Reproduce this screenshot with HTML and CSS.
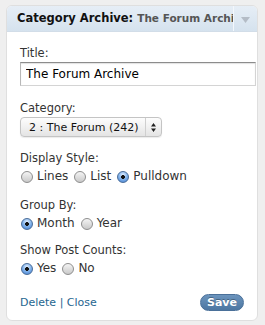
FILE: index.html
```html
<!DOCTYPE html>
<html lang="en">
<head>
  <meta charset="UTF-8">
  <title>Category Archive widget</title>
  <link rel="stylesheet" href="styles.css">
</head>
<body>

<div class="widget">
  <div class="widget-top">
    <div class="widget-title">
      <h4>Category Archive: <span class="in-title">The Forum Archive</span></h4>
    </div>
    <div class="widget-action">
      <svg width="9" height="6" viewBox="0 0 9 6"><path d="M0 0 H9 L4.5 6 Z" fill="#b4bcc6"/></svg>
    </div>
  </div>

  <div class="widget-inside">
    <p class="first">
      <label for="titulo">Title:</label>
      <input id="titulo" class="widefat" type="text" value="The Forum Archive">
    </p>

    <p>
      <label for="cat">Category:</label>
      <span class="select-wrap">
        <select id="cat">
          <option>2 : The Forum (242)</option>
        </select>
        <span class="select-arrows">
          <svg width="5" height="9" viewBox="0 0 5 9"><path d="M2.5 0 L5 3.5 H0 Z M2.5 9 L5 5.5 H0 Z" fill="#222"/></svg>
        </span>
      </span>
    </p>

    <p>
      <label>Display Style:</label>
      <span class="radios">
        <label class="opt"><input type="radio" name="estilo"> Lines</label>
        <label class="opt"><input type="radio" name="estilo"> List</label>
        <label class="opt"><input type="radio" name="estilo" checked> Pulldown</label>
      </span>
    </p>

    <p class="tight">
      <label>Group By:</label>
      <span class="radios">
        <label class="opt"><input type="radio" name="grupo" checked> Month</label>
        <label class="opt"><input type="radio" name="grupo"> Year</label>
      </span>
    </p>

    <p>
      <label>Show Post Counts:</label>
      <span class="radios">
        <label class="opt"><input type="radio" name="cuenta" checked> Yes</label>
        <label class="opt"><input type="radio" name="cuenta"> No</label>
      </span>
    </p>

    <div class="widget-control-actions">
      <div class="links"><a href="#">Delete</a> | <a href="#">Close</a></div>
      <button class="button-primary">Save</button>
    </div>
  </div>
</div>

</body>
</html>
```

FILE: styles.css
```css
body {
  margin: 0;
  padding: 5px 8px 0 6px;
  background-color: #efefef;
  font-family: "DejaVu Sans", sans-serif;
  font-size: 11.5px;
  color: #333;
}

.widget {
  width: 250px;
  background-color: #fff;
  border: 1px solid #dfdfdf;
  border-radius: 6px;
  overflow: hidden;
}

.widget-top {
  display: flex;
  height: 25px;
  background: linear-gradient(#e6eef6, #d5e2ee);
  border-bottom: 1px solid #d2dde8;
}

.widget-title {
  flex: 1;
  overflow: hidden;
  white-space: nowrap;
  padding-left: 10px;
}

.widget-title h4 {
  margin: 0;
  line-height: 25px;
  font-size: 11.5px;
  font-weight: bold;
  color: #111;
}

.in-title {
  font-size: 10.5px;
  color: #555;
}

.widget-action {
  width: 23px;
  border-left: 1px solid #f3f7fb;
  display: flex;
  align-items: center;
  justify-content: center;
  padding-top: 2px;
}

.widget-inside {
  padding: 13px 0 9px 13px;
}

.widget-inside p {
  margin: 0 0 13px;
}

.widget-inside p.first {
  margin-bottom: 14px;
}

.widget-inside p.tight {
  margin-bottom: 11px;
}

.widget-inside p > label {
  display: block;
  line-height: 16px;
}

.widefat {
  display: block;
  box-sizing: border-box;
  width: 236px;
  height: 24px;
  margin-top: 1px;
  padding: 0 5px;
  border: 1px solid #d4d4d4;
  border-top-color: #8c8c8c;
  border-left-color: #b8b8b8;
  box-shadow: inset 0 1px 1px rgba(0,0,0,0.12);
  font-family: "DejaVu Sans", sans-serif;
  font-size: 12px;
  color: #000;
}

.select-wrap {
  display: inline-flex;
  margin-top: 1px;
  height: 20px;
  box-sizing: border-box;
  border: 1px solid #c4c4c4;
  border-radius: 4px;
  background: linear-gradient(#fdfdfd, #e4e4e4);
  box-shadow: 0 1px 1px rgba(0,0,0,0.08);
}

.select-wrap select {
  appearance: none;
  border: none;
  background: transparent;
  padding: 0 6px 0 8px;
  font-family: "DejaVu Sans", sans-serif;
  font-size: 11px;
  color: #111;
}

.select-arrows {
  width: 15px;
  border-left: 1px solid #cfcfcf;
  display: flex;
  align-items: center;
  justify-content: center;
}

.radios {
  display: flex;
  gap: 5px;
  margin-top: 2px;
}

.opt {
  display: flex;
  align-items: center;
  gap: 4px;
  line-height: 16px;
  font-size: 12px;
}

.opt input {
  appearance: none;
  width: 12px;
  height: 12px;
  margin: 2px 0 0 1px;
  border: 1px solid #8e8e8e;
  border-radius: 50%;
  background: linear-gradient(#f4f4f4, #c9c9c9);
  box-sizing: border-box;
}

.opt input:checked {
  border-color: #4a6d99;
  background:
    radial-gradient(circle, #111 0 1.6px, transparent 2.2px),
    radial-gradient(circle at 50% 30%, #e3efff 0, #8ab8ec 45%, #3d7bd0 100%);
}

.widget-control-actions {
  display: flex;
  align-items: center;
  justify-content: space-between;
  padding-right: 13px;
  margin-top: 18px;
}

.links {
  color: #1f6690;
  font-size: 11px;
}

.links a {
  color: #1f6690;
  text-decoration: none;
}

.button-primary {
  width: 44px;
  height: 17px;
  padding: 0;
  border: 1px solid #4a7099;
  border-radius: 9px;
  background: linear-gradient(#6b94bd, #4d76a1);
  color: #fff;
  font-family: "DejaVu Sans", sans-serif;
  font-size: 11px;
  font-weight: bold;
  text-shadow: 0 -1px 0 rgba(0,0,0,0.3);
}
```
